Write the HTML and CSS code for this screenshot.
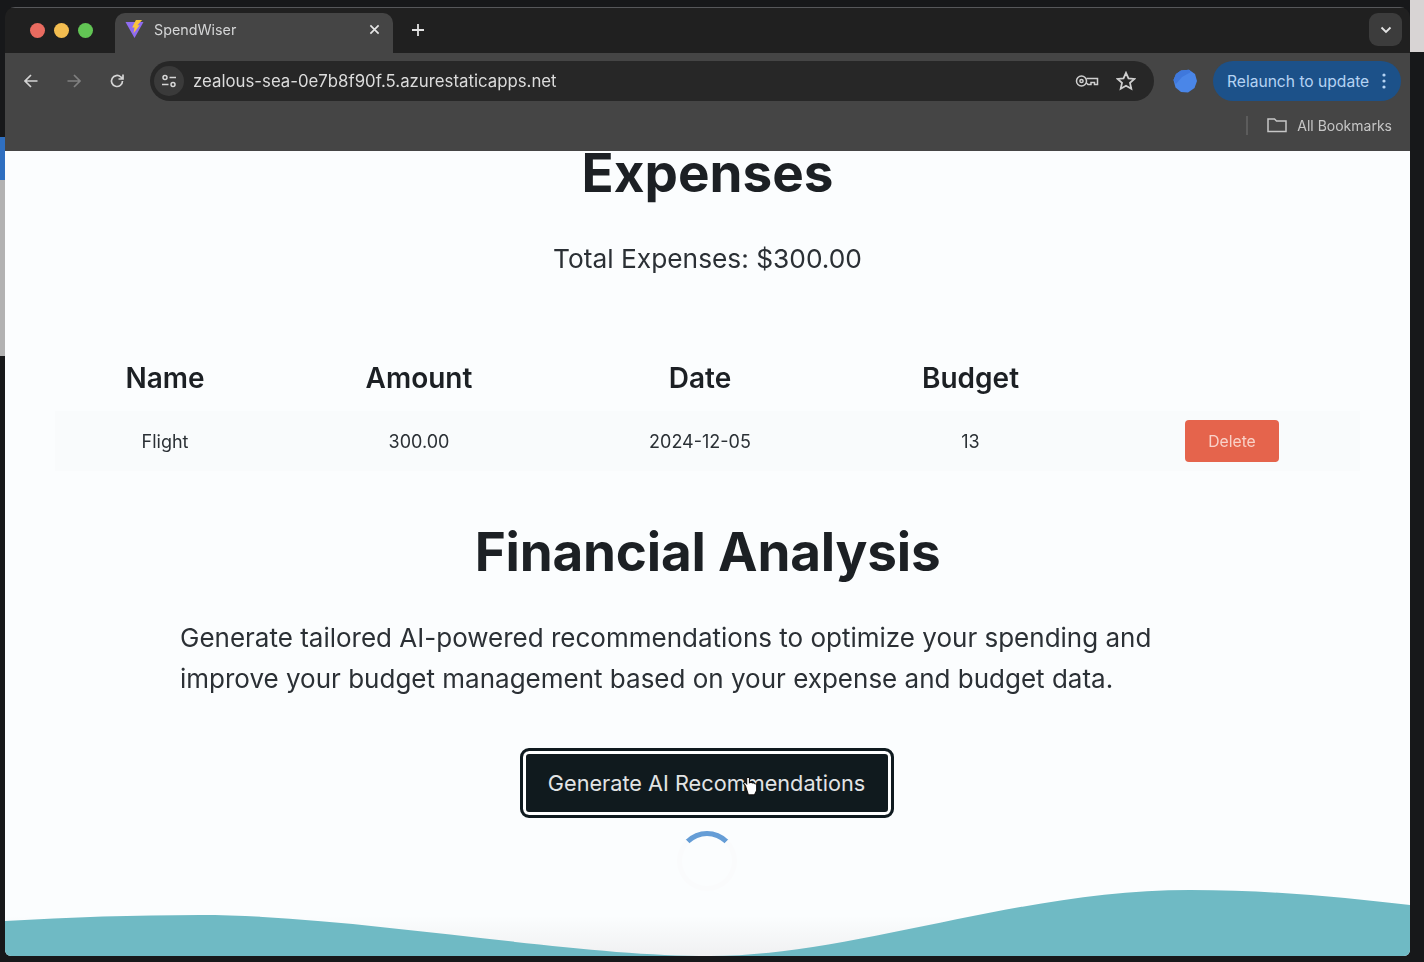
FILE: index.html
```html
<!DOCTYPE html>
<html lang="en">
  <head>
    <meta charset="UTF-8" />
    <meta name="viewport" content="width=device-width, initial-scale=1.0" />
    <title>SpendWiser</title>
    <link rel="stylesheet" href="styles.css">
  </head>
  <body>
    <div class="window">
      <div class="tabstrip">
        <div class="lights">
          <span class="light red"></span>
          <span class="light yellow"></span>
          <span class="light green"></span>
        </div>
        <div class="tab">
          <svg class="favicon" viewBox="0 0 20 20">
            <path d="M0.5 2.5 L19.5 2.5 L10 19.5 Z" fill="#8f6cf0" />
            <path d="M11.5 0.5 L18 0.5 L13 6 L15.5 6 L9 14.5 L10 8.5 L7.5 8.5 Z" fill="#fbc53a" />
          </svg>
          <span class="tab-title">SpendWiser</span>
          <svg class="tab-close" viewBox="0 0 12 12">
            <path d="M1.5 1.5 L10.5 10.5 M10.5 1.5 L1.5 10.5" />
          </svg>
        </div>
        <svg class="new-tab" viewBox="0 0 14 14">
          <path d="M7 1 V13 M1 7 H13" />
        </svg>
        <div class="tab-search">
          <svg viewBox="0 0 12 8"><path d="M1.5 1.5 L6 6 L10.5 1.5" /></svg>
        </div>
      </div>

      <div class="toolbar">
        <svg class="nav-icon" viewBox="0 0 16 16">
          <path d="M14.5 8 H2 M8 2 L2 8 L8 14" />
        </svg>
        <svg class="nav-icon disabled" viewBox="0 0 16 16">
          <path d="M1.5 8 H14 M8 2 L14 8 L8 14" />
        </svg>
        <svg class="nav-icon" viewBox="0 0 16 16">
          <path d="M13.5 8 A5.5 5.5 0 1 1 11.8 4 L14 6 M14 1.5 V6 H9.5" />
        </svg>
        <div class="omnibox">
          <span class="site-info">
            <svg viewBox="0 0 16 14">
              <circle cx="4" cy="3.5" r="2" />
              <path d="M8.5 3.5 H15 M1 10.5 H7.5" />
              <circle cx="12" cy="10.5" r="2" />
            </svg>
          </span>
          <span class="url">zealous-sea-0e7b8f90f.5.azurestaticapps.net</span>
          <svg class="omni-icon key" viewBox="0 0 24 14">
            <circle cx="6.5" cy="7" r="5" />
            <circle cx="6.5" cy="7" r="1.6" />
            <path d="M11.5 4.5 H22.5 V10.5 H19.5 V8.5 H16 V10.5 H13 L11.5 9" />
          </svg>
          <svg class="omni-icon star" viewBox="0 0 20 20">
            <path d="M10 1.8 L12.5 7.3 L18.4 7.9 L14 11.9 L15.3 17.8 L10 14.8 L4.7 17.8 L6 11.9 L1.6 7.9 L7.5 7.3 Z" />
          </svg>
        </div>
        <svg class="profile" viewBox="0 0 24 24">
          <path d="M8 1.5 L16 0.8 L22 5 L24 12 L21.5 19 L15 23.5 L8 23 L2.5 18.5 L0.5 11 L3 5 Z" fill="#4a86e8" />
          <path d="M8 1.5 L16 0.8 L18 3 L9 8 L3 15 L0.5 11 L3 5 Z" fill="#3f78dc" />
        </svg>
        <div class="relaunch">
          <span>Relaunch to update</span>
          <svg viewBox="0 0 4 16">
            <circle cx="2" cy="2" r="1.6" />
            <circle cx="2" cy="8" r="1.6" />
            <circle cx="2" cy="14" r="1.6" />
          </svg>
        </div>
      </div>

      <div class="bookmarks">
        <span class="divider"></span>
        <svg class="folder" viewBox="0 0 20 16">
          <path d="M1 14.5 V2 H7.5 L9.5 4 H19 V14.5 Z" />
        </svg>
        <span>All Bookmarks</span>
      </div>

      <div class="page">
        <h2 class="page-title">Expenses</h2>
        <p class="total">Total Expenses: $300.00</p>

        <div class="table-head">
          <span>Name</span>
          <span>Amount</span>
          <span>Date</span>
          <span>Budget</span>
          <span></span>
        </div>
        <div class="table-row">
          <span>Flight</span>
          <span>300.00</span>
          <span>2024-12-05</span>
          <span>13</span>
          <span><button class="delete-btn">Delete</button></span>
        </div>

        <h2 class="analysis-title">Financial Analysis</h2>
        <p class="analysis-text">
          Generate tailored AI-powered recommendations to optimize your spending and
          improve your budget management based on your expense and budget data.
        </p>

        <div class="generate-wrap">
          <button class="generate-btn">Generate AI Recommendations</button>
          <svg class="hand-cursor" viewBox="0 0 14 18">
            <path d="M3 9 L1 6.5 L2.5 5.5 L4 7 V1.5 L5.5 1 L6.5 1.5 V6 L8 5.5 L9 6.2 L10.5 6 L11.5 7 L13 7.2 V13 L11 17 H5.5 Z" fill="#fff" stroke="#111" stroke-width="1" />
          </svg>
        </div>
        <div class="spinner"></div>

        <svg class="wave" viewBox="0 0 1405 66" preserveAspectRatio="none">
          <path d="M0 31 C65 27 130 25 195 25 C350 25 560 66 705 66 C850 66 1010 0 1185 0 C1270 0 1340 8 1405 15 V66 H0 Z" />
        </svg>
      </div>
    </div>
  </body>
</html>
```

FILE: styles.css
```css
* {
  box-sizing: border-box;
}
html,
body {
  height: 100%;
}
body {
  margin: 0;
  overflow: hidden;
  font-family: Inter, "Noto Sans", sans-serif;
  background:
    linear-gradient(#d8d4d4, #d8d4d4) right top / 14px 52px no-repeat,
    linear-gradient(#b2b2b2, #b2b2b2) left 180px / 5px 176px no-repeat,
    linear-gradient(#2f6fc0, #2f6fc0) left 137px / 5px 45px no-repeat,
    #17181a;
  display: flex;
}
.window {
  flex: 1;
  margin: 7px 14px 6px 5px;
  border-radius: 10px 10px 6px 6px;
  overflow: hidden;
  display: flex;
  flex-direction: column;
  filter: blur(0.45px);
}

/* tab strip */
.tabstrip {
  height: 46px;
  flex: none;
  background: #202020;
  border-top: 1px solid #56575a;
  display: flex;
  align-items: flex-end;
  position: relative;
}
.lights {
  display: flex;
  gap: 9px;
  padding: 0 0 15px 25px;
  width: 110px;
}
.light {
  width: 15px;
  height: 15px;
  border-radius: 50%;
}
.red {
  background: #e96b60;
}
.yellow {
  background: #f3bd50;
}
.green {
  background: #62c554;
}
.tab {
  width: 278px;
  height: 40px;
  background: #454545;
  border-radius: 10px 10px 0 0;
  display: flex;
  align-items: center;
  padding: 0 13px 8px 10px;
  color: #d4d5d6;
  font-size: 14.3px;
}
.favicon {
  width: 19px;
  height: 20px;
}
.tab-title {
  flex: 1;
  margin-left: 10px;
}
.tab-close {
  width: 11px;
  height: 11px;
  fill: none;
  stroke: #e6e6e6;
  stroke-width: 1.8;
}
.new-tab {
  width: 14px;
  height: 14px;
  margin: 0 0 16px 18px;
  fill: none;
  stroke: #e2e2e2;
  stroke-width: 1.8;
}
.tab-search {
  margin: 0 8px 7px auto;
  width: 33px;
  height: 33px;
  border-radius: 9px;
  background: #3c3c3c;
  display: flex;
  align-items: center;
  justify-content: center;
}
.tab-search svg {
  width: 12px;
  height: 8px;
  fill: none;
  stroke: #e4e4e4;
  stroke-width: 1.8;
}

/* toolbar */
.toolbar {
  height: 52px;
  flex: none;
  background: #454545;
  display: flex;
  align-items: center;
  padding: 4px 9px 0 18px;
}
.nav-icon {
  width: 16px;
  height: 16px;
  margin-right: 27px;
  fill: none;
  stroke: #d4d4d4;
  stroke-width: 1.7;
}
.nav-icon.disabled {
  stroke: #808080;
}
.nav-icon:nth-child(3) {
  margin-right: 25px;
}
.omnibox {
  width: 1004px;
  height: 40px;
  border-radius: 20px;
  background: #272727;
  display: flex;
  align-items: center;
  padding: 0 18px 0 4px;
}
.site-info {
  width: 30px;
  height: 30px;
  border-radius: 50%;
  background: #3a3a3a;
  display: flex;
  align-items: center;
  justify-content: center;
}
.site-info svg {
  width: 16px;
  height: 14px;
  fill: none;
  stroke: #d6d6d6;
  stroke-width: 1.5;
}
.url {
  flex: 1;
  margin-left: 9px;
  font-size: 16.8px;
  color: #dcdcdc;
}
.omni-icon {
  fill: none;
  stroke: #cfcfcf;
  stroke-width: 1.5;
}
.key {
  width: 24px;
  height: 14px;
  margin-right: 17px;
}
.star {
  width: 20px;
  height: 20px;
  stroke-width: 1.8;
}
.profile {
  width: 24px;
  height: 24px;
  margin-left: 19px;
}
.relaunch {
  margin-left: 16px;
  width: 188px;
  height: 40px;
  border-radius: 20px;
  background: #1c5189;
  color: #b5d3f3;
  font-size: 15.6px;
  display: flex;
  align-items: center;
  justify-content: space-between;
  padding: 0 15px 0 14px;
}
.relaunch svg {
  width: 4px;
  height: 16px;
  fill: #b5d3f3;
}

/* bookmarks bar */
.bookmarks {
  height: 46px;
  flex: none;
  background: #454545;
  display: flex;
  align-items: center;
  justify-content: flex-end;
  padding: 0 18px 6px 0;
  font-size: 14px;
  color: #c6c6c6;
}
.divider {
  width: 2px;
  height: 19px;
  background: #5c5c5c;
  margin-right: 19px;
}
.folder {
  width: 20px;
  height: 16px;
  margin-right: 10px;
  fill: none;
  stroke: #c6c6c6;
  stroke-width: 1.5;
}

/* app content */
.page {
  flex: 1;
  position: relative;
  background: linear-gradient(#fbfdfe 0, #fbfdfe 765px, #f0f1f2 805px);
  color: #1c2024;
  text-align: center;
}
.page-title {
  margin: 0;
  font-size: 53px;
  line-height: 44px;
  font-weight: 700;
}
.total {
  margin: 44px 0 0;
  font-size: 26.3px;
  line-height: 40px;
  color: #2b3035;
}
.table-head,
.table-row {
  display: grid;
  grid-template-columns: 220px 288px 274px 267px 256px;
  margin-left: 50px;
  width: 1305px;
  align-items: center;
}
.table-head {
  margin-top: 67px;
  height: 65px;
  font-size: 28px;
  font-weight: 600;
  padding-bottom: 2px;
}
.table-row {
  height: 60px;
  background: #f9fbfc;
  font-size: 18px;
  color: #2b3035;
}
.delete-btn {
  width: 94px;
  height: 42px;
  border: none;
  border-radius: 4px;
  background: #e5644c;
  color: #f9d2c8;
  font-family: inherit;
  font-size: 15.7px;
  vertical-align: middle;
}
.analysis-title {
  margin: 46px 0 0;
  font-size: 53px;
  line-height: 70px;
  font-weight: 700;
  letter-spacing: -0.2px;
}
.analysis-text {
  margin: 30px 0 0 175px;
  width: 1000px;
  text-align: left;
  font-size: 26px;
  line-height: 41px;
  color: #2b3035;
}
.generate-wrap {
  position: relative;
  width: 374px;
  margin: 49px auto 0;
  left: -1px;
}
.generate-btn {
  display: block;
  width: 374px;
  height: 70px;
  border: 3px solid #fff;
  outline: 3px solid #0f1a1f;
  outline-offset: -3px;
  box-shadow: inset 0 0 0 3px #fff;
  border-radius: 9px;
  background: #101a1e;
  color: #e2e4e5;
  font-family: inherit;
  font-size: 21.7px;
  padding: 0;
}
.hand-cursor {
  position: absolute;
  left: 222px;
  top: 28px;
  width: 16px;
  height: 20px;
}
.spinner {
  width: 60px;
  height: 60px;
  margin: 13px auto 0;
  position: relative;
  left: -1px;
  border-radius: 50%;
  border: 5px solid #fafbfc;
  border-top-color: #659dd6;
}
.wave {
  position: absolute;
  left: 0;
  bottom: 0;
  width: 100%;
  height: 66px;
  fill: #6fbac4;
}
```
